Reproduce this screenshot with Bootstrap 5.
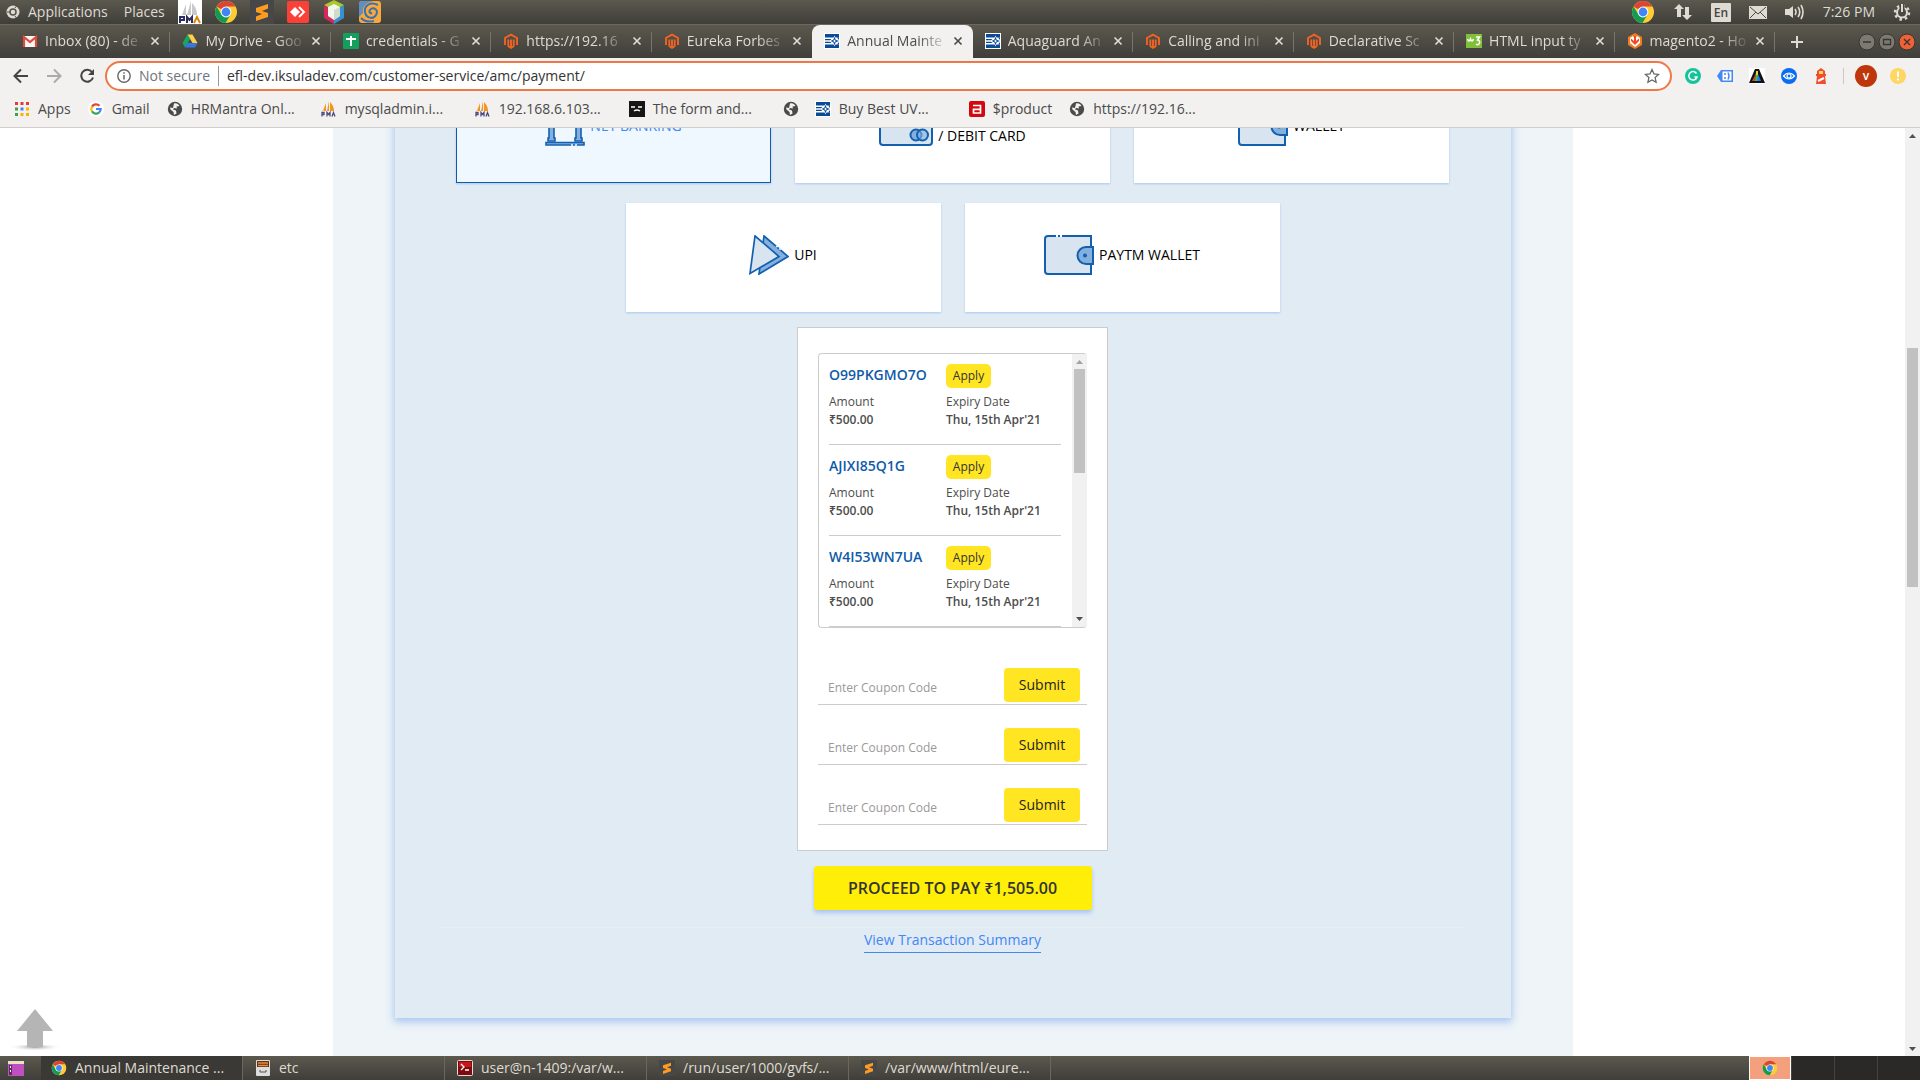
<!DOCTYPE html>
<html lang="en">
<head>
<meta charset="utf-8">
<meta name="viewport" content="width=device-width, initial-scale=1">
<title>Annual Maintenance Contract - Payment</title>
<link href="https://cdn.jsdelivr.net/npm/bootstrap@5.3.0/dist/css/bootstrap.min.css" rel="stylesheet">
<style>
  body { font-family: "Open Sans", "Noto Sans", sans-serif; font-size: 14px; line-height: 20px; background: #fff; }
  svg { flex: none; display: block; }
  .desk { height: 100vh; }
  .shade { background: linear-gradient(#5b584e, #3f3e39); color: #dfdbd2; }
  .shell { font-size: 14px; white-space: nowrap; }
  .shell button, .shell a { color: inherit; text-decoration: none; background: none; border: 0; padding: 0; }
  .topbar { height: 24px; padding: 0 9px 0 6px; }
  .topbar .launch { gap: 12px; margin-left: 13px; }
  .topbar .tray { gap: 18px; }
  .tabstrip { height: 34px; border-top: 1px solid #6b695f; padding-left: 10px; padding-right: 4px; }
  .tabset { flex: 0 1 1765px; min-width: 0; }
  .tab { flex: 1 1 0; min-width: 0; padding: 0 8px 2px 12px; border-right: 1px solid transparent; position: relative; }
  .tab::after { content: ""; position: absolute; right: -1px; top: 7px; height: 20px; width: 1px; background: #77746a; }
  .tab.on::after, .tab.pre::after { display: none; }
  .tab.on { background: #f2f1f0; color: #4c4c4c; border-radius: 8px 8px 0 0; }
  .tab .cap { flex: 1 1 0; margin-left: 7px; -webkit-mask-image: linear-gradient(90deg, #000 68%, transparent 97%); mask-image: linear-gradient(90deg, #000 68%, transparent 97%); }
  .tab .cap a { display: block; }
  .tools { height: 36px; background: #f2f1f0; padding: 0 14px 0 12px; color: #5a5a5a; }
  .tools .who { margin-left: 11px; margin-right: 13px; }
  .tools .split { width: 1px; height: 16px; background: #c9c9c9; margin-left: 14px; }
  .omni { height: 30px; border: 2px solid #f07746; border-radius: 15px; background: #fff; padding: 0 10px; margin-left: 9px; margin-right: 13px; gap: 8px; }
  .omni input { border: 0; outline: 0; background: none; min-width: 0; color: #333; padding: 0; }
  .omni .vline { width: 1px; height: 20px; background: #999; }
  .marks { height: 34px; background: #f2f1f0; border-bottom: 1px solid #cfcdca; color: #4a4a4a; padding-left: 14px; padding-bottom: 3px; }
  .marks a { display: flex; align-items: center; gap: 8px; }
  .marks .brief { padding-right: 17px; }
  .marks .wide { width: 154px; }
  .marks .bare { width: 32px; }

  .view { flex: 1 1 0; min-height: 0; overflow: hidden; position: relative; }
  .site { flex: 1 1 0; min-width: 0; }
  .wrap { max-width: 1240px; background: #eef4f7; }
  .panel { max-width: 1116px; background: #e1ebf4; box-shadow: 0 3px 8px 1px #a9c6f2; margin-bottom: 38px; }
  .scrolled { margin-top: -54px; }
  .methods { gap: 20px 24px; max-width: 1040px; }
  .method { width: 315px; height: 109px; background: #fff; border: 1px solid #fff; color: #000; gap: 5px; padding: 0 0 6px; text-align: left; box-shadow: 0 1px 2px #a9c6f2; display: flex; align-items: center; justify-content: center; }
  .method.picked { background: #f0f8ff; border-color: #0f5ba9; color: #4287f5; }
  .coupons { width: 311px; background: #fff; border: 1px solid #ccc; padding: 25px 20px; margin-top: 15px; }
  .vouchers { height: 275px; border: 1px solid #ccc; border-right: 0; border-radius: 4px; overflow: hidden; }
  .vlist { flex: 1; padding: 0 11px 0 10px; overflow: hidden; }
  .voucher { border-bottom: 1px solid #ccc; padding: 10px 0 15px; font-size: 12px; line-height: 18px; color: #4d4d4d; }
  .voucher .code { font-size: 14px; font-weight: 600; color: #0f5ba9; line-height: 22px; }
  .voucher .head { height: 24px; margin-bottom: 5px; }
  .voucher b { font-weight: 600; display: block; }
  .half { flex: 0 0 117px; }
  .apply { background: #ffe522; border: 0; border-radius: 5px; color: #333; width: 45px; height: 24px; font-size: 12px; padding: 0; }
  .sbar { width: 15px; flex: none; background: #f1f1f1; }
  .sbar .thumb { width: 11px; background: #c1c1c1; }
  .entries { padding-top: 17px; }
  .entry { height: 60px; border-bottom: 1px solid #ccc; padding: 23px 7px 2px 10px; }
  .entry input { border: 0; outline: 0; flex: 1; min-width: 0; font-size: 12px; padding: 5px 0 0; background: none; }
  .entry input::placeholder { color: #999; opacity: 1; }
  .send { width: 76px; background: #ffe522; border: 0; border-radius: 4px; color: #222; padding: 0; font-size: 14px; }
  .pay { width: 278px; height: 44px; margin-top: 15px; background: #ffee07; border: 0; border-radius: 3px; color: #333; font-size: 16px; font-weight: 600; box-shadow: 0 3px 4px #a9c6f2; padding: 0; }
  .rule { height: 1px; background: #e9eef1; width: 92%; margin: 17px 0 1px; }
  .summary { color: #4287f5; text-decoration: none; border-bottom: 1px solid #4287f5; line-height: 22px; padding-bottom: 1px; margin-bottom: 65px; }
  .totop { position: absolute; left: 8px; bottom: 4px; border: 0; background: none; padding: 0; }

  .taskbar { height: 24px; }
  .taskbar .task { width: 202px; gap: 8px; padding: 0 12px; border-left: 1px solid #6a675d; }
  .taskbar .now { background: #3a3935; border: 0; padding: 0 10px; margin-left: 11px; width: 201px; }
  .taskbar .rest { border-left: 1px solid #6a675d; }
  .taskbar .space { width: 43px; background: #2a2927; border-left: 1px solid #454440; }
  .taskbar .cur { width: 42px; background: #f5a07c; border: 1px solid #fff; }
</style>
<script src="https://cdn.jsdelivr.net/npm/bootstrap@5.3.0/dist/js/bootstrap.bundle.min.js"></script>
</head>
<body>
<svg width="0" height="0" class="position-absolute" aria-hidden="true">
  <symbol id="chrome" viewBox="0 0 24 24"><circle cx="12" cy="12" r="11" fill="#fc3"/><path d="M12 12 2.5 6.500A11 11 0 0 1 21.500 6.500H12z" fill="#dd4436"/><path d="M2.500 6.500A11 11 0 0 0 11.500 23L16.500 14.500 12 12 7.500 14.500z" fill="#139a54"/><circle cx="12" cy="12" r="5.400" fill="#fff"/><circle cx="12" cy="12" r="4.400" fill="#4285f4"/></symbol>
  <symbol id="sublime" viewBox="0 0 24 24"><path fill="#474747" d="M0 0h24v24H0z"/><path fill="#ff9b21" d="m6 8 12-4v4.500l-6 2.500 6 2v4L6 21v-4.500l6-2.500-6-2z"/></symbol>
  <symbol id="magento" viewBox="0 0 16 16"><path d="M2 12V5l6-3.400L14 5v7M5.300 13.500V6.500M10.700 13.500V6.500M8 6.500v8M5.300 13.200 8 14.800l2.700-1.600" fill="none" stroke="#f26322" stroke-width="1.900"/></symbol>
  <symbol id="eureka" viewBox="0 0 16 16"><path fill="#fff" d="M0 0h16v16H0z"/><path fill="#0b4a94" d="M1 1h14v3.500H1zM1 11.500h14V15H1zM1 6h6.500l-1.500 1.300H1zM1 8.700h5L7.500 10H1z"/><path fill="#fff" d="M10.500 2.500 12 6h4v4h-4l-1.500 3.500L9 10 5.500 8 9 6z"/><path fill="#0b4a94" d="m10.500 3.800 1.200 3 3.300 1.200-3.300 1.200-1.200 3-1.200-3L6.500 8l2.800-1.200z"/><path fill="#fff" d="m10.500 6.300.6 1.100 1.200.6-1.200.6-.6 1.100-.6-1.100L8.700 8l1.200-.6z"/><path fill="#0b4a94" d="M13 4.500h2V7zM13 11.500h2V9z"/></symbol>
  <symbol id="globe" viewBox="0 0 16 16"><circle cx="8" cy="8" r="7.200" fill="#4a4a4a"/><path d="M7 2.500c3-.5 4 .5 5.500 2.500l-3 .5.500 2-3-.5-1 1.500 3 1 .5 3-2.500 1.500-.5-3-3-2.500L3 6.500l3 .5z" fill="#f2f1f0"/></symbol>
  <symbol id="sail" viewBox="0 0 16 16"><path fill="#f7941e" d="M5 2v8H2zM8 0v10H6zM9 1c3 3 4 6 4 9H9z"/><path fill="#e9c48d" d="M3 7v3H1z"/><path d="M1 15.500v-4h2v2H1M6 15.500v-4l1.500 2 1.500-2v4M11 15.500l1.500-4 1.500 4" stroke="#4b4a7d" fill="none" stroke-width="1.300"/></symbol>
  <symbol id="close" viewBox="0 0 12 12"><path d="m2.500 2.500 7 7m0-7-7 7" stroke="currentColor" stroke-width="1.700"/></symbol>
  <symbol id="wallet" viewBox="0 0 50 40"><path d="M47 1H4a3 3 0 0 0-3 3v32a3 3 0 0 0 3 3h43z" fill="#d8e4f0" stroke="#1460b0" stroke-width="2"/><path d="M12 1h6" stroke="#fff" stroke-width="2" stroke-dasharray="2 2"/><path d="M49 12h-7a8 8 0 0 0 0 17h7z" fill="#84b0de" stroke="#1460b0" stroke-width="2"/><circle cx="41" cy="20.500" r="2" fill="#1460b0"/></symbol>
</svg>

<div class="desk d-flex flex-column overflow-hidden">
  <header class="shell">
    <div class="topbar shade d-flex align-items-center justify-content-between">
      <div class="d-flex align-items-center">
        <svg width="14" height="14" viewBox="0 0 14 14"><circle cx="7" cy="7" r="6.500" fill="#dfdbd2"/><circle cx="7" cy="7" r="3" fill="none" stroke="#55534a" stroke-width="1.500"/><path d="M1 7h3M9 3l1.500-2M9 11l1.500 2" stroke="#55534a"/></svg>
        <button class="ms-2">Applications</button><button class="ms-3">Places</button>
        <div class="launch d-flex align-items-center">
          <svg width="24" height="24" viewBox="0 0 24 24"><path fill="#fff" d="M0 0h24v24H0z"/><path fill="#c9c9c9" d="M8 4v11H4zM13 1v14H9zM14 3c4 4 5 8 5 12h-5z"/><path d="M2 23v-6h4v3H2M9 23v-6l2.500 3 2.500-3v6" stroke="#2e2d62" fill="none" stroke-width="2"/><path d="m16 23 3-6 3 6" stroke="#d9880f" fill="none" stroke-width="2"/></svg>
          <svg width="24" height="24"><use href="#chrome"/></svg>
          <svg width="24" height="24"><use href="#sublime"/></svg>
          <svg width="24" height="24" viewBox="0 0 24 24"><rect x="1" y="1" width="22" height="22" rx="2" fill="#fb4137"/><path fill="#fff" d="m9 7 5 5-5 5-5-5z"/><path d="m13 7 5 5-5 5" stroke="#fff" stroke-width="2" fill="none"/></svg>
          <svg width="24" height="24" viewBox="0 0 24 24"><path fill="#a9c92c" d="m12 0 10 5-10 6L2 5z"/><path fill="#d8285a" d="M2 5l10 6v13L2 18z"/><path fill="#3a8fd1" d="m22 5-10 6v13l10-6z"/><path fill="#f3f6ef" d="m12 4 6 3v9l-6 4-6-4V7z"/><path fill="#cfdccb" d="m12 10 6-3v9l-6 4z"/></svg>
          <svg width="24" height="24" viewBox="0 0 24 24"><rect x="1" y="1" width="22" height="22" rx="3" fill="#f9a83c"/><path fill="#5f8fc0" d="M3 1h13C8 2 4 7 5 13l-4 4V3z"/><path d="M20 5C12 1 6 6 7 12s8 8 11 3-2-8-5-6-1 5 1 4M3 18c4 4 9 4 13 3" stroke="#3e6fae" stroke-width="2" fill="none"/></svg>
        </div>
      </div>
      <div class="tray d-flex align-items-center">
        <svg width="24" height="24"><use href="#chrome"/></svg>
        <svg width="20" height="20" viewBox="0 0 20 20" fill="#dfdbd2"><path d="M6 2l5 5H8v8H4V7H1zM14 18l-5-5h3V5h4v8h3z"/></svg>
        <svg width="20" height="20" viewBox="0 0 20 20"><rect width="20" height="19" rx="1" y="1" fill="#dfdbd2"/><text x="10" y="15" font-family="Open Sans" font-size="12" font-weight="600" text-anchor="middle" fill="#45443e">En</text></svg>
        <svg width="18" height="20" viewBox="0 0 18 20"><rect y="4" width="18" height="13" fill="#dfdbd2"/><path d="m1 5 8 7 8-7M1 16l6-6m10 6-6-6" stroke="#4c4a43" fill="none"/></svg>
        <svg width="20" height="20" viewBox="0 0 20 20"><path fill="#dfdbd2" d="M0 7h4l4-3v12l-4-3H0z"/><path d="M10 7q2 3 0 6M13 5q3.500 5 0 10M16 3q4 7 0 14" stroke="#dfdbd2" fill="none" stroke-width="1.600"/></svg>
        <span>7:26 PM</span>
        <svg width="18" height="18" viewBox="0 0 18 18"><circle cx="9" cy="9.500" r="5" fill="none" stroke="#dfdbd2" stroke-width="2"/><circle cx="9" cy="9.500" r="7" fill="none" stroke="#dfdbd2" stroke-width="2.500" stroke-dasharray="2.500 3"/><path d="M9 1v8" stroke="#49473f" stroke-width="5"/><path d="M9 1v8" stroke="#dfdbd2" stroke-width="2"/></svg>
      </div>
    </div>

    <div class="tabstrip shade d-flex align-items-center justify-content-between">
      <nav class="tabset d-flex align-self-stretch" aria-label="Tabs">
        <div class="tab d-flex align-items-center"><svg width="16" height="16" viewBox="0 0 16 16"><path fill="#f5f5f5" d="M1 3h14v11H1z"/><path d="M2 14V4l6 5 6-5v10" stroke="#dd4b39" stroke-width="2.200" fill="none"/></svg><div class="cap"><a href="#">Inbox (80) - de</a></div><button aria-label="Close"><svg width="12" height="12"><use href="#close"/></svg></button></div>
        <div class="tab d-flex align-items-center"><svg width="16" height="16" viewBox="0 0 16 16"><path fill="#11a861" d="M5.500 1.500 8 6l-5 8.500L.5 10z"/><path fill="#ffcf48" d="M5.500 1.500h5L15.500 10h-5z"/><path fill="#3777e3" d="m5.500 10h10L13 14.500H3z"/></svg><div class="cap"><a href="#">My Drive - Goo</a></div><button aria-label="Close"><svg width="12" height="12"><use href="#close"/></svg></button></div>
        <div class="tab d-flex align-items-center"><svg width="16" height="16" viewBox="0 0 16 16"><rect width="16" height="16" rx="1" fill="#12a05c"/><path d="M3 6h10M8 3v10" stroke="#fff" stroke-width="2"/></svg><div class="cap"><a href="#">credentials - G</a></div><button aria-label="Close"><svg width="12" height="12"><use href="#close"/></svg></button></div>
        <div class="tab d-flex align-items-center"><svg width="16" height="16"><use href="#magento"/></svg><div class="cap"><a href="#">https://192.16</a></div><button aria-label="Close"><svg width="12" height="12"><use href="#close"/></svg></button></div>
        <div class="tab pre d-flex align-items-center"><svg width="16" height="16"><use href="#magento"/></svg><div class="cap"><a href="#">Eureka Forbes</a></div><button aria-label="Close"><svg width="12" height="12"><use href="#close"/></svg></button></div>
        <div class="tab on d-flex align-items-center"><svg width="16" height="16"><use href="#eureka"/></svg><div class="cap"><a href="#">Annual Mainte</a></div><button aria-label="Close"><svg width="12" height="12"><use href="#close"/></svg></button></div>
        <div class="tab d-flex align-items-center"><svg width="16" height="16"><use href="#eureka"/></svg><div class="cap"><a href="#">Aquaguard An</a></div><button aria-label="Close"><svg width="12" height="12"><use href="#close"/></svg></button></div>
        <div class="tab d-flex align-items-center"><svg width="16" height="16"><use href="#magento"/></svg><div class="cap"><a href="#">Calling and ini</a></div><button aria-label="Close"><svg width="12" height="12"><use href="#close"/></svg></button></div>
        <div class="tab d-flex align-items-center"><svg width="16" height="16"><use href="#magento"/></svg><div class="cap"><a href="#">Declarative Sc</a></div><button aria-label="Close"><svg width="12" height="12"><use href="#close"/></svg></button></div>
        <div class="tab d-flex align-items-center"><svg width="16" height="16" viewBox="0 0 16 16"><path fill="#80bf3a" d="M0 1h16v14H0z"/><path d="M1.500 6q1.500 4 3 0 1.500 4 3 0M10 4h3.500L11.500 7q3.500 1 1.500 4-1.500 1.500-3 0" stroke="#fff" stroke-width="1.600" fill="none"/></svg><div class="cap"><a href="#">HTML input ty</a></div><button aria-label="Close"><svg width="12" height="12"><use href="#close"/></svg></button></div>
        <div class="tab d-flex align-items-center"><svg width="16" height="16" viewBox="0 0 16 16"><path fill="#f47b20" d="m8 0 7 4v8l-7 4-7-4V4z"/><path fill="#fff" d="m8 6 2-3 3 2v5l-5 4-5-4V5l3-2z"/><path fill="#ee4a23" d="m8 12-4-4V5.500l3 2.500V3h2v5l3-2.500V8z"/></svg><div class="cap"><a href="#">magento2 - Ho</a></div><button aria-label="Close"><svg width="12" height="12"><use href="#close"/></svg></button></div>
      </nav>
      <div class="d-flex align-items-center flex-grow-1 justify-content-between ps-3">
        <button aria-label="New tab"><svg width="12" height="12" viewBox="0 0 12 12"><path d="M6 0v12M0 6h12" stroke="#dfdbd2" stroke-width="2"/></svg></button>
        <svg width="58" height="18" viewBox="0 0 58 18"><g stroke="#37362f"><circle cx="9" cy="9" r="8" fill="#7b7971"/><circle cx="29" cy="9" r="8" fill="#7b7971"/><circle cx="49" cy="9" r="8" fill="#ee6035"/></g><path d="M5 9h8M25.500 6.500h7v5h-7zM46 6l6 6m0-6-6 6" stroke="#37362f" stroke-width="1.300" fill="none"/></svg>
      </div>
    </div>

    <div class="tools d-flex align-items-center">
      <button aria-label="Back"><svg width="18" height="18" viewBox="0 0 18 18"><path d="M16 9H3m6-6.500L2.500 9 9 15.500" stroke="#444" stroke-width="2" fill="none"/></svg></button>
      <button aria-label="Forward" class="ms-3"><svg width="18" height="18" viewBox="0 0 18 18"><path d="M1 9h13M8 2.500 14.500 9 8 15.500" stroke="#aaa" stroke-width="2" fill="none"/></svg></button>
      <button aria-label="Reload" class="ms-3"><svg width="16" height="18" viewBox="0 0 16 18"><path d="M12 5a6 6 0 1 0 1 5.500" stroke="#444" stroke-width="2" fill="none"/><path d="M14 2v6H8z" fill="#444"/></svg></button>
      <div class="omni d-flex align-items-center flex-grow-1">
        <svg width="14" height="14" viewBox="0 0 14 14"><circle cx="7" cy="7" r="6.200" fill="none" stroke="#666" stroke-width="1.400"/><path d="M7 6v4.500M7 3.200v1.600" stroke="#666" stroke-width="1.500"/></svg>
        <label for="url" class="text-secondary">Not secure</label><span class="vline"></span>
        <input id="url" class="flex-grow-1" value="efl-dev.iksuladev.com/customer-service/amc/payment/">
        <svg width="16" height="16" viewBox="0 0 16 16"><path d="m8 1.500 2 4.400 4.600.5-3.500 3.200 1 4.700L8 12l-4.100 2.300 1-4.700L1.400 6.400 6 5.900z" stroke="#666" stroke-width="1.300" fill="none"/></svg>
      </div>
      <div class="d-flex align-items-center gap-3">
        <svg width="16" height="16" viewBox="0 0 16 16"><circle cx="8" cy="8" r="8" fill="#15c39a"/><path d="M11.500 5.500A4.200 4.200 0 1 0 12 9H9.500" stroke="#fff" stroke-width="1.500" fill="none"/></svg>
        <svg width="16" height="16" viewBox="0 0 16 16"><path fill="#4587f4" d="M4 2h12v12H4L0 8z"/><path fill="#fff" d="M5.500 3.500h9v9h-9z"/><path d="M8 5v2m0 2v2M11 4.500q2 3.500 0 7" stroke="#4587f4" stroke-width="1.500" fill="none"/></svg>
        <svg width="16" height="16" viewBox="0 0 16 16"><path fill="#fff" d="M0 0h16v16H0z"/><path fill="#111" d="M6 1h4l6 14H0z"/><path fill="#e33" d="m7 5-4 8h3z"/><path fill="#3c4" d="M7 4h2v9H6z"/><path fill="#27f" d="m9 6 3 7H8z"/><path fill="#fc2" d="M7 3h2v4H7z"/></svg>
        <svg width="16" height="16" viewBox="0 0 16 16"><circle cx="8" cy="8" r="8" fill="#0a6cf0"/><path d="M2.500 8q5.500-6 11 0-5.500 6-11 0z" fill="none" stroke="#fff" stroke-width="1.200"/><circle cx="8" cy="8" r="2" fill="none" stroke="#fff" stroke-width="1.200"/></svg>
        <svg width="16" height="16" viewBox="0 0 16 16"><path fill="#f04e2e" d="M4 3l4-3 4 3v3h1v2h-1l1 8H3l1-8H3V6h1z"/><path fill="#ffd54f" d="M6 3h4v3H6z"/><path d="m5 13 6-3" stroke="#fff" stroke-width="2"/></svg>
      </div>
      <span class="split"></span>
      <svg width="22" height="22" viewBox="0 0 22 22" class="who"><circle cx="11" cy="11" r="11" fill="#bf360c"/><text x="11" y="15" font-family="Open Sans" font-size="12" font-weight="600" text-anchor="middle" fill="#fff">v</text></svg>
      <svg width="16" height="16" viewBox="0 0 16 16"><circle cx="8" cy="8" r="8" fill="#fdd663"/><path d="M8 3.500v5.500m0 1.500v2" stroke="#fff" stroke-width="2"/></svg>
    </div>

    <nav class="marks d-flex align-items-center" aria-label="Bookmarks">
      <a href="#" class="brief"><svg width="16" height="16" viewBox="0 0 16 16"><path fill="#e53935" d="M1 1h3v3H1zM6.500 1h3v3h-3zM12 1h3v3h-3z"/><path fill="#43a047" d="M1 6.500h3v3H1zM1 12h3v3H1z"/><path fill="#4285f4" d="M6.500 6.500h3v3h-3z"/><path fill="#fbb300" d="M12 6.500h3v3h-3zM6.500 12h3v3h-3zM12 12h3v3h-3z"/></svg>Apps</a>
      <a href="#" class="brief"><svg width="16" height="16" viewBox="0 0 16 16"><circle cx="8" cy="8" r="8" fill="#fff"/><g fill="none" stroke-width="2.200"><path d="M11.500 4.800A4.700 4.700 0 0 0 4 5.600" stroke="#ea4335"/><path d="M4 5.600a4.700 4.700 0 0 0 0 4.800" stroke="#fbbc05"/><path d="M4 10.400a4.700 4.700 0 0 0 7 1.200" stroke="#34a853"/><path d="M11 11.600A4.700 4.700 0 0 0 12.700 8H8" stroke="#4285f4"/></g></svg>Gmail</a>
      <a href="#" class="wide"><svg width="16" height="16"><use href="#globe"/></svg>HRMantra Onl...</a>
      <a href="#" class="wide"><svg width="16" height="16"><use href="#sail"/></svg>mysqladmin.i...</a>
      <a href="#" class="wide"><svg width="16" height="16"><use href="#sail"/></svg>192.168.6.103...</a>
      <a href="#" class="wide"><svg width="16" height="16" viewBox="0 0 16 16"><path fill="#161616" d="M0 0h16v16H0z"/><path d="M2 6h4m3 0h4M5 10q3-2 6 0" stroke="#fff" stroke-width="1.400" fill="none"/></svg>The form and...</a>
      <a href="#" class="bare" aria-label="Bookmark"><svg width="16" height="16"><use href="#globe"/></svg></a>
      <a href="#" class="wide"><svg width="16" height="16"><use href="#eureka"/></svg>Buy Best UV...</a>
      <a href="#" class="brief"><svg width="16" height="16" viewBox="0 0 16 16"><rect width="16" height="16" rx="2" fill="#d4070f"/><path d="M4 4.500h7.500v7.500h-7V8.300h7" stroke="#fff" stroke-width="1.700" fill="none"/></svg>$product</a>
      <a href="#" class="wide"><svg width="16" height="16"><use href="#globe"/></svg>https://192.16...</a>
    </nav>
  </header>

  <main class="view d-flex">
    <div class="site">
      <div class="wrap mx-auto h-100 overflow-hidden">
        <div class="scrolled d-flex flex-column">
          <section class="panel w-100 mx-auto d-flex flex-column align-items-center">
            <div class="methods d-flex flex-wrap justify-content-center">
              <button class="method picked">
                <svg width="40" height="40" viewBox="0 0 40 40"><path d="M20 1 2 9v5h36V9z" fill="#d8e4f0" stroke="#1460b0" stroke-width="2"/><path d="M4 15h5v17h1v3H3v-3h1zM31 15h5v17h1v3h-7v-3h1z" fill="#84b0de" stroke="#1460b0" stroke-width="1.600"/><path d="M1 36.500h38V39H1z" fill="#84b0de" stroke="#1460b0" stroke-width="1.600"/><path d="M26 39h2m2 0h2" stroke="#fff" stroke-width="1.500"/></svg>
                <span>NET BANKING</span></button>
              <button class="method">
                <svg width="54" height="40" viewBox="0 0 54 40"><rect x="1" y="1" width="52" height="38" rx="3" fill="#d8e4f0" stroke="#1460b0" stroke-width="2"/><circle cx="37" cy="29" r="5.500" fill="#84b0de" stroke="#1460b0" stroke-width="2"/><circle cx="43.500" cy="29" r="5.500" fill="#84b0de" fill-opacity=".6" stroke="#1460b0" stroke-width="2"/></svg>
                <span>CREDIT CARD<br>/ DEBIT CARD</span></button>
              <button class="method"><svg width="50" height="40"><use href="#wallet"/></svg><span>WALLET</span></button>
              <button class="method">
                <svg width="40" height="40" viewBox="0 0 40 40"><path d="m15 1 24 20.500L10 39z" fill="#84b0de" stroke="#1460b0" stroke-width="1.700"/><path d="m6 1 24 20.500L1 38.500z" fill="#d8e4f0" stroke="#1460b0" stroke-width="1.700"/><path d="m27 11 5 4" stroke="#fff" stroke-width="1.500" stroke-dasharray="2 2"/></svg>
                <span>UPI</span></button>
              <button class="method"><svg width="50" height="40"><use href="#wallet"/></svg><span>PAYTM WALLET</span></button>
            </div>

            <div class="coupons">
              <div class="vouchers d-flex">
                <div class="vlist">
                  <div class="voucher"><div class="head d-flex"><span class="code half">O99PKGMO7O</span><button class="apply">Apply</button></div><div class="d-flex"><div class="half">Amount<b>₹500.00</b></div><div>Expiry Date<b>Thu, 15th Apr'21</b></div></div></div>
                  <div class="voucher"><div class="head d-flex"><span class="code half">AJIXI85Q1G</span><button class="apply">Apply</button></div><div class="d-flex"><div class="half">Amount<b>₹500.00</b></div><div>Expiry Date<b>Thu, 15th Apr'21</b></div></div></div>
                  <div class="voucher"><div class="head d-flex"><span class="code half">W4I53WN7UA</span><button class="apply">Apply</button></div><div class="d-flex"><div class="half">Amount<b>₹500.00</b></div><div>Expiry Date<b>Thu, 15th Apr'21</b></div></div></div>
                </div>
                <div class="sbar d-flex flex-column align-items-center">
                  <svg width="15" height="15" viewBox="0 0 15 15"><path d="m4 10 3.500-4 3.500 4z" fill="#a3a3a3"/></svg>
                  <div class="flex-grow-1"><div class="thumb" style="height:43%"></div></div>
                  <svg width="15" height="15" viewBox="0 0 15 15"><path d="m4 5 3.500 4L11 5z" fill="#505050"/></svg>
                </div>
              </div>
              <div class="entries">
                <div class="entry d-flex"><input type="text" aria-label="Coupon code 1" placeholder="Enter Coupon Code"><button class="send">Submit</button></div>
                <div class="entry d-flex"><input type="text" aria-label="Coupon code 2" placeholder="Enter Coupon Code"><button class="send">Submit</button></div>
                <div class="entry d-flex"><input type="text" aria-label="Coupon code 3" placeholder="Enter Coupon Code"><button class="send">Submit</button></div>
              </div>
            </div>

            <button class="pay">PROCEED TO PAY ₹1,505.00</button>
            <div class="rule"></div>
            <a href="#" class="summary">View Transaction Summary</a>
          </section>
        </div>
      </div>
    </div>
    <div class="sbar d-flex flex-column align-items-center">
      <svg width="15" height="15" viewBox="0 0 15 15"><path d="m4 10 3.500-4 3.500 4z" fill="#505050"/></svg>
      <div class="flex-grow-1 d-flex flex-column"><div style="height:22.8%"></div><div class="thumb" style="height:26.6%"></div></div>
      <svg width="15" height="15" viewBox="0 0 15 15"><path d="m4 6 3.500 4L11 6z" fill="#505050"/></svg>
    </div>
    <button class="totop" aria-label="Back to top"><svg width="56" height="46" viewBox="0 0 56 46"><defs><radialGradient id="g"><stop offset="0" stop-color="#999"/><stop offset="1" stop-color="#fff" stop-opacity="0"/></radialGradient></defs><ellipse cx="27" cy="41" rx="27" ry="4" fill="url(#g)"/><path fill="#fff" d="M0 34h56v5H0z"/><path fill="#b5b5b5" d="m27 3 18 22h-10v16H19V25H9z"/></svg></button>
  </main>

  <footer class="taskbar shell shade d-flex align-items-stretch">
    <button class="ps-2" style="width:30px" aria-label="Show desktop"><svg width="16" height="16" viewBox="0 0 16 16"><path fill="#c04fc0" d="M0 2h16v14H0z"/><path fill="#e9e3c8" d="M0 1h16v3H0z"/><path fill="#59305b" d="M1 5h3v10H1z"/><path d="M2.500 6v2m0 2v2" stroke="#fff"/></svg></button>
    <button class="task now d-flex align-items-center"><svg width="16" height="16"><use href="#chrome"/></svg>Annual Maintenance ...</button>
    <button class="task d-flex align-items-center"><svg width="16" height="16" viewBox="0 0 16 16"><rect x="1" width="14" height="16" rx="1" fill="#ddd"/><path fill="#5b3213" d="M2 1h12v6H2z"/><path d="M3 3h10M3 5.500h10" stroke="#f08a3c" stroke-width="1.500"/><path d="M5 10v2h6v-2" stroke="#555" fill="none"/></svg>etc</button>
    <button class="task d-flex align-items-center"><svg width="16" height="16" viewBox="0 0 16 16"><rect x=".5" y=".5" width="15" height="15" rx="1" fill="#7d0a0d" stroke="#ddd"/><path d="M2 2h12v5H2z" fill="#c8161b"/><path d="m4 4 3 3-3 3m4 0h4" stroke="#fff" fill="none" stroke-width="1.300"/></svg>user@n-1409:/var/w...</button>
    <button class="task d-flex align-items-center"><svg width="16" height="16"><use href="#sublime"/></svg>/run/user/1000/gvfs/...</button>
    <button class="task d-flex align-items-center"><svg width="16" height="16"><use href="#sublime"/></svg>/var/www/html/eure...</button>
    <div class="rest d-flex flex-grow-1 justify-content-end">
      <button class="space cur d-flex align-items-center justify-content-center" aria-label="Workspace 1"><svg width="16" height="16"><use href="#chrome"/></svg></button>
      <button class="space" aria-label="Workspace 2"></button>
      <button class="space" aria-label="Workspace 3"></button>
      <button class="space" aria-label="Workspace 4"></button>
    </div>
  </footer>
</div>
</body>
</html>
